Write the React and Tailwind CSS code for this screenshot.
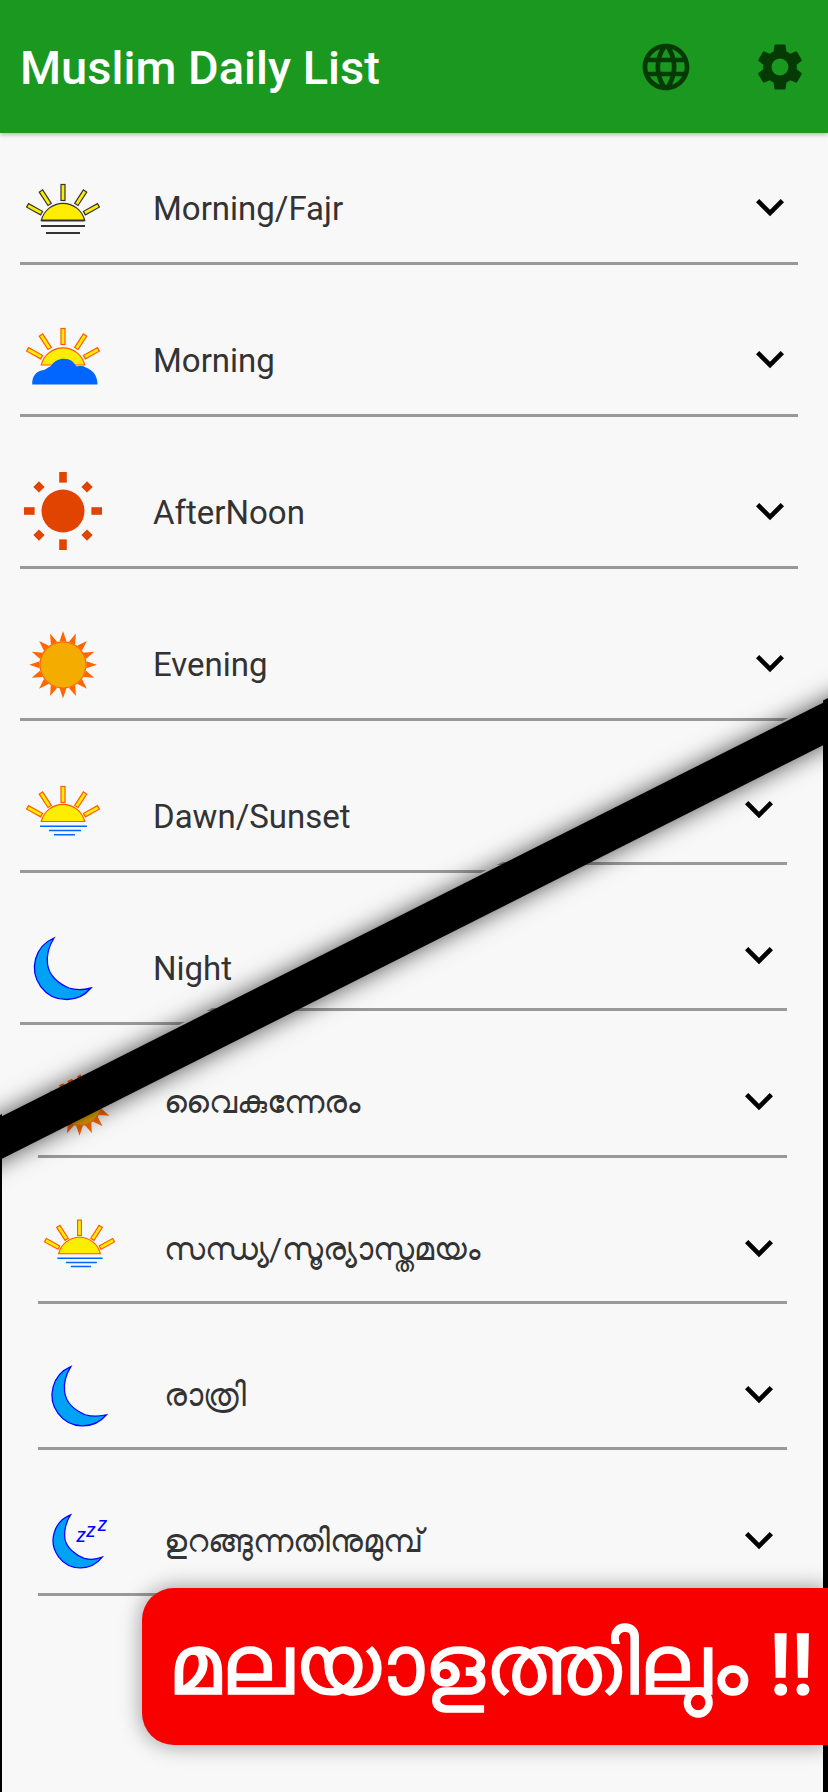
import { MdKeyboardArrowDown, MdLanguage, MdSettings } from "react-icons/md";

const ORANGE = "#ff5a00";
const BLUE = "#0066ff";

const Rays = ({ cy, fill, stroke }) => (
    <g fill={fill} stroke={stroke} strokeWidth="1.2">
        {[-61, -33, 0, 33, 61].map((a) => (
            <rect key={a} x="38" y={cy - 40.5} width="4" height="16" transform={`rotate(${a} 40 ${cy})`} />
        ))}
    </g>
);

const Disc = ({ base, fill, stroke }) => (
    <path d={`M18.3 ${base} A22.3 22.3 0 0 1 61.7 ${base} Z`} fill={fill} stroke={stroke} strokeWidth="1.2" />
);

const FajrIcon = () => (
    <>
        <Rays cy={57} fill="#ffed00" stroke="#333" />
        <Disc base={52.5} fill="#ffed00" stroke="#333" />
        <path d="M18.3 52.5H61.7M18 58H62M23 65H57" stroke="#333" strokeWidth="2" fill="none" />
    </>
);

const MorningIcon = () => (
    <>
        <Rays cy={49} fill="#ffed00" stroke={ORANGE} />
        <Disc base={45} fill="#ffed00" stroke={ORANGE} />
        <path
            d="M9.2 64.5C9 56 13 51 21 50C24 49 25 47 28 46C31 41 36 38.8 41 38.8C47 38.8 51 42 53 46C55 47 59 45 62 47C66 49 74.5 52 74.5 64.5Z"
            fill={BLUE}
        />
    </>
);

const NoonIcon = () => (
    <g fill="#e04400">
        <circle cx="40" cy="39" r="21.5" />
        {[0, 90, 180, 270].map((a) => (
            <rect key={a} x="36.2" y="0" width="7.6" height="10.6" transform={`rotate(${a} 40 39)`} />
        ))}
        {[45, 135, 225, 315].map((a) => (
            <rect key={a} x="36" y="1" width="8" height="8" transform={`rotate(${a} 40 39)`} />
        ))}
    </g>
);

const EveningIcon = () => (
    <>
        {Array.from({ length: 16 }, (_, i) => i * 22.5).map((a) => (
            <path key={a} d="M36.5 17.5L40 7L43.5 17.5Z" fill="#ff6600" transform={`rotate(${a} 40 40.8)`} />
        ))}
        <circle cx="40" cy="40.8" r="23" fill="#f4ac00" stroke="#ff6600" strokeWidth="1.2" />
    </>
);

const SunsetIcon = () => (
    <>
        <Rays cy={51} fill="#ffed00" stroke={ORANGE} />
        <Disc base={45.5} fill="#ffed00" stroke={ORANGE} />
        <path d="M17 50.2H64M26 54.5H58M31 58.7H52" stroke={BLUE} strokeWidth="1.6" fill="none" />
    </>
);

const NightIcon = () => (
    <path
        d="M31 10A32 32 0 1 0 68 60C62 61.5 54 62.5 46 60C36 56 26 48 24.5 36C23.5 28 26 18 31 10Z"
        fill="#00a2f5"
        stroke="#0000ff"
        strokeWidth="1.3"
    />
);

const SleepIcon = () => (
    <>
        <path
            d="M30.7 12.3A28.5 28.5 0 1 0 63.6 56.3C58 58.5 51 59 45 57.5C36 54 27 47 25 38C23.5 30 26 19 30.7 12.3Z"
            fill="#00a2f5"
            stroke="#0000ff"
            strokeWidth="1.3"
        />
        <g fill="#0000ff" fontFamily="Roboto, sans-serif" fontStyle="italic" fontSize="20">
            <text x="37" y="41">z</text>
            <text x="47" y="35.5">z</text>
            <text x="59" y="29">z</text>
        </g>
    </>
);

const topRows = [
    { label: "Morning/Fajr", icon: <FajrIcon /> },
    { label: "Morning", icon: <MorningIcon /> },
    { label: "AfterNoon", icon: <NoonIcon /> },
    { label: "Evening", icon: <EveningIcon /> },
    { label: "Dawn/Sunset", icon: <SunsetIcon /> },
    { label: "Night", icon: <NightIcon /> },
];

// first two rows of this list sit behind the english screen, only the arrows show
const lowerRows = [
    {},
    {},
    { label: "വൈകുന്നേരം", icon: <EveningIcon /> },
    { label: "സന്ധ്യ/സൂര്യാസ്തമയം", icon: <SunsetIcon /> },
    { label: "രാത്രി", icon: <NightIcon /> },
    { label: "ഉറങ്ങുന്നതിനുമുമ്പ്", icon: <SleepIcon /> },
];

const App = () => {
    return (
        <div className="relative w-[828px] h-[1792px] overflow-hidden bg-[#f8f8f8] font-['Roboto','Noto_Sans',sans-serif]">
            <div className="absolute inset-0 flex flex-col gap-[39px] pt-[757.7px] pl-[36px] pr-[36px] border-l-2 border-r-[5px] border-black">
                {lowerRows.map((row, i) => (
                    <div key={i} className="flex items-center h-[107.3px] shrink-0 border-b-[3px] border-[#999999]">
                        <svg viewBox="0 0 80 80" className="w-[77px] h-[77px] ml-[2.5px] shrink-0">
                            {row.icon}
                        </svg>
                        <span className="ml-[46.5px] text-[32px] text-[#333333]">{row.label}</span>
                        <MdKeyboardArrowDown className="ml-auto mb-[2px] text-black" size={56} />
                    </div>
                ))}
            </div>

            <div className="absolute inset-0 bg-[#f8f8f8] [clip-path:polygon(0_0,828px_0,828px_698px,0_1115px)]">
                <header className="flex items-center h-[133px] pl-[20px] pr-[20px] bg-[#1a9820] shadow-[0_2px_4px_rgba(0,0,0,0.25)]">
                    <h1 className="flex-1 mt-[3px] text-[47px] font-medium text-white">Muslim Daily List</h1>
                    <MdLanguage className="text-[#053a05]" size={56} />
                    <MdSettings className="ml-[58px] text-[#053a05]" size={56} />
                </header>
                <div className="flex flex-col gap-[40px] pt-[20px] pl-[20px] pr-[30px]">
                    {topRows.map((row) => (
                        <div key={row.label} className="flex items-center h-[112px] border-b-[3px] border-[#999999]">
                            <svg viewBox="0 0 80 80" className="w-20 h-20 ml-[2.5px] shrink-0">
                                {row.icon}
                            </svg>
                            <span className="ml-[50.5px] mt-[3px] text-[33px] text-[#333333]">{row.label}</span>
                            <MdKeyboardArrowDown className="ml-auto mb-[2px] text-black" size={56} />
                        </div>
                    ))}
                </div>
            </div>

            <div className="absolute left-[-86px] top-[911px] w-[1000px] h-[38.4px] bg-black -rotate-[26.73deg] shadow-[0_0_24px_rgba(0,0,0,0.7)]" />

            <div className="absolute left-[142px] right-0 top-[1588px] h-[157px] flex items-center justify-center pl-[12px] rounded-l-[32px] bg-[#f80000] shadow-[0_0_22px_rgba(0,0,0,0.4)]">
                <span className="text-[84.5px] font-medium text-white whitespace-nowrap [-webkit-text-stroke:1.5px_white]">മലയാളത്തിലും !!</span>
            </div>
        </div>
    );
};

export default App;
